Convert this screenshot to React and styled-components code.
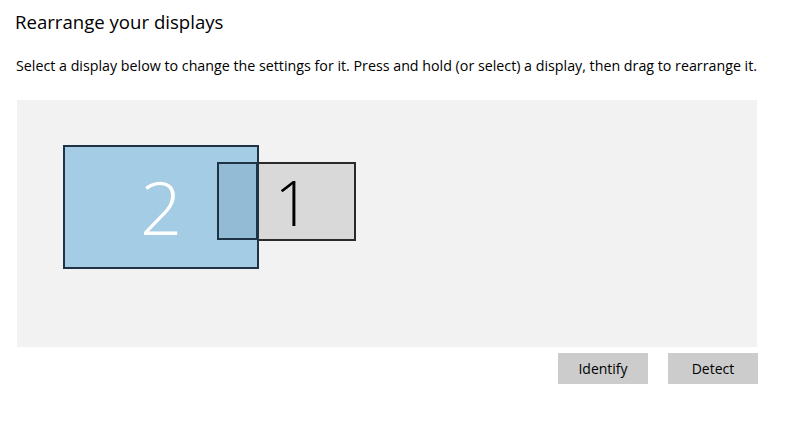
import styled, { createGlobalStyle } from "styled-components";

const GlobalStyle = createGlobalStyle`
  html, body {
    margin: 0;
    padding: 0;
    background: #ffffff;
  }
  body {
    font-family: "Open Sans", "Noto Sans", sans-serif;
    color: #000000;
  }
`;

const Page = styled.main`
  width: 787px;
  height: 421px;
  padding: 9px 0 0 15px;
  box-sizing: border-box;
`;

const Title = styled.h1`
  margin: 0;
  font-size: 18.6px;
  font-weight: 400;
  line-height: 26px;
  color: #000;
`;

const Hint = styled.p`
  margin: 21px 0 0 1px;
  font-size: 14.25px;
  line-height: 20px;
  color: #000;
  white-space: nowrap;
`;

const Canvas = styled.section`
  position: relative;
  margin: 24px 0 0 2px;
  width: 740px;
  height: 247px;
  background: #f2f2f2;
`;

const Display = styled.div`
  position: absolute;
  box-sizing: border-box;
  left: ${(p) => p.$x}px;
  top: ${(p) => p.$y}px;
  width: ${(p) => p.$w}px;
  height: ${(p) => p.$h}px;
  background: ${(p) => p.$fill};
  border: 2px solid ${(p) => p.$edge};
  z-index: ${(p) => p.$z};
  display: flex;
  align-items: center;
  justify-content: center;
`;

const Number = styled.span`
  font-family: "Open Sans", sans-serif;
  font-weight: 300;
  font-size: ${(p) => p.$size}px;
  line-height: 1;
  color: ${(p) => p.$color};
  margin-top: ${(p) => p.$shift}px;
  margin-left: ${(p) => p.$nudge || 0}px;
`;

const Overlap = styled.div`
  position: absolute;
  box-sizing: border-box;
  left: 200px;
  top: 62px;
  width: 41px;
  height: 78px;
  background: #93bbd6;
  border: 2px solid #1e3444;
  z-index: 3;
`;

const Actions = styled.div`
  display: flex;
  justify-content: flex-end;
  gap: 20px;
  width: 743px;
  margin-top: 6px;
`;

const Button = styled.button`
  width: 90px;
  height: 31px;
  border: none;
  background: #cccccc;
  font-family: "Open Sans", sans-serif;
  font-size: 14px;
  color: #000;
  padding: 0;
  cursor: pointer;
`;

export default function App() {
  return (
    <>
      <GlobalStyle />
      <Page>
        <Title>Rearrange your displays</Title>
        <Hint>
          Select a display below to change the settings for it. Press and hold
          (or select) a display, then drag to rearrange it.
        </Hint>
        <Canvas>
          <Display $x={46} $y={45} $w={196} $h={124} $fill="#a5cce5" $edge="#1e3444" $z={2}>
            <Number $size={74} $color="#ffffff" $shift={0}>2</Number>
          </Display>
          <Display $x={200} $y={62} $w={139} $h={79} $fill="#d9d9d9" $edge="#2a2a2a" $z={1}>
            <Number $size={62} $color="#000000" $shift={0} $nudge={12}>1</Number>
          </Display>
          <Overlap />
        </Canvas>
        <Actions>
          <Button>Identify</Button>
          <Button>Detect</Button>
        </Actions>
      </Page>
    </>
  );
}
